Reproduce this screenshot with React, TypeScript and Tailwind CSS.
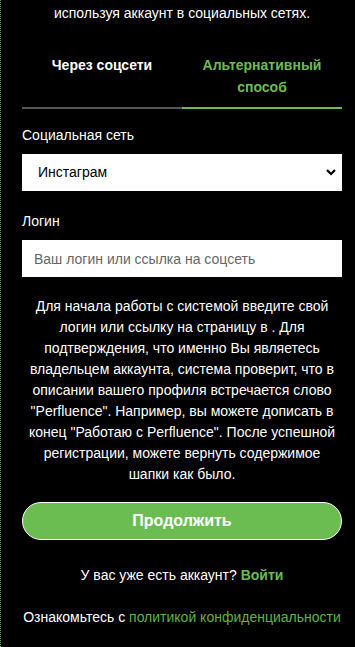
import { useState } from "react";

export default function App() {
  const [tab, setTab] = useState<"social" | "alt">("alt");
  const [network, setNetwork] = useState("instagram");
  const [login, setLogin] = useState("");

  return (
    <div
      className="min-h-screen bg-black border-l border-dotted border-[#5aa845] text-white"
      style={{ fontFamily: '"Liberation Sans", Arial, sans-serif' }}
    >
      <div className="pl-[21px] pr-[13px] pt-[3px] pb-[20px]">
        <p className="text-center text-[14px] leading-[21px]">
          используя аккаунт в социальных сетях.
        </p>

        {/* tabs */}
        <div className="mt-[30px] flex">
          <button
            type="button"
            onClick={() => setTab("social")}
            className={`w-1/2 flex justify-center items-start pb-[9px] border-b-2 text-[14px] leading-[22px] font-bold ${
              tab === "social" ? "border-[#6bbd52] text-[#6bbd52]" : "border-[#555] text-white"
            }`}
          >
            <span>Через соцсети</span>
          </button>
          <button
            type="button"
            onClick={() => setTab("alt")}
            className={`w-1/2 flex justify-center items-start pb-[9px] border-b-2 text-[14px] leading-[22px] font-bold px-4 ${
              tab === "alt" ? "border-[#6bbd52] text-[#6bbd52]" : "border-[#555] text-white"
            }`}
          >
            <span className="text-center">Альтернативный способ</span>
          </button>
        </div>

        <label className="mt-[16px] block text-[14px] leading-[20px]">Социальная сеть</label>
        <div className="relative mt-[9px]">
          <select
            value={network}
            onChange={(e) => setNetwork(e.target.value)}
            className="w-full h-[37px] appearance-none bg-white text-black text-[14px] pl-[16px] pr-8 rounded-none outline-none"
          >
            <option value="instagram">Инстаграм</option>
            <option value="vk">ВКонтакте</option>
            <option value="youtube">YouTube</option>
          </select>
          <svg
            className="pointer-events-none absolute right-[6px] top-[14px] h-[9px] w-[10px]"
            viewBox="0 0 10 9"
            fill="none"
            stroke="#000"
            strokeWidth={2.2}
          >
            <path d="M1 2l4 4 4-4" />
          </svg>
        </div>

        <label className="mt-[20px] block text-[14px] leading-[20px]">Логин</label>
        <input
          value={login}
          onChange={(e) => setLogin(e.target.value)}
          placeholder="Ваш логин или ссылка на соцсеть"
          className="mt-[9px] w-full h-[37px] bg-white text-black text-[14px] px-[12px] outline-none placeholder:text-[#666]"
        />

        <p className="mt-[19px] text-center text-[14px] leading-[21px] px-[4px]">
          Для начала работы с системой введите свой логин или ссылку на страницу в . Для
          подтверждения, что именно Вы являетесь владельцем аккаунта, система проверит, что
          в описании вашего профиля встречается слово "Perfluence". Например, вы можете
          дописать в конец "Работаю с Perfluence". После успешной регистрации, можете
          вернуть содержимое шапки как было.
        </p>

        <button
          type="button"
          className="mt-[17px] w-full h-[38px] rounded-full bg-[#6bbd52] border border-white text-white font-bold text-[16px]"
        >
          Продолжить
        </button>

        <p className="mt-[25px] text-center text-[14px] leading-[20px]">
          У вас уже есть аккаунт?{" "}
          <a href="#" className="font-bold text-[#6bbd52]">
            Войти
          </a>
        </p>

        <p className="mt-[22px] text-center text-[14px] leading-[20px] whitespace-nowrap">
          Ознакомьтесь с{" "}
          <a href="#" className="text-[#5fb547]">
            политикой конфиденциальности
          </a>
        </p>
      </div>
    </div>
  );
}
